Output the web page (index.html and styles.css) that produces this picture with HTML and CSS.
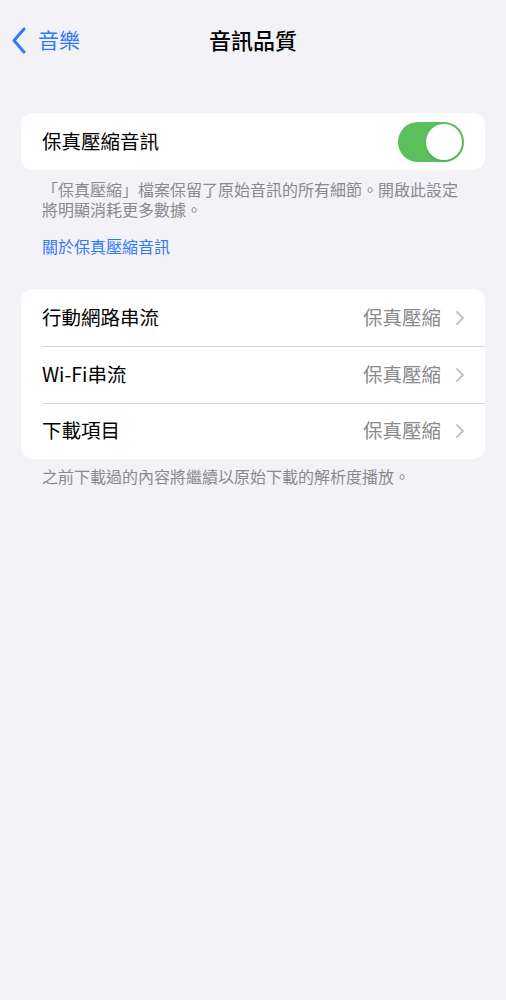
FILE: index.html
```html
<!DOCTYPE html>
<html>
	<head>
		<meta charset="UTF-8">
		<title>音訊品質</title>
		<link rel="stylesheet" href="styles.css">
	</head>
	<body>
		<div class="nav">
			<a class="back">
				<svg width="16" height="27" viewBox="0 0 16 27"><path d="M13 2 L3 13.5 L13 25" fill="none" stroke="#3478f6" stroke-width="3" stroke-linecap="round" stroke-linejoin="round"/></svg>
				<span>音樂</span>
			</a>
			<div class="title">音訊品質</div>
			<div></div>
		</div>

		<div class="card card-first">
			<div class="row">
				<span class="label">保真壓縮音訊</span>
				<div class="switch on"><div class="knob"></div></div>
			</div>
		</div>
		<p class="note">「保真壓縮」檔案保留了原始音訊的所有細節。開啟此設定將明顯消耗更多數據。</p>
		<a class="link">關於保真壓縮音訊</a>

		<div class="card card-second">
			<div class="row">
				<span class="label">行動網路串流</span>
				<span class="value">保真壓縮</span>
				<svg class="chev" width="10" height="16" viewBox="0 0 10 16"><path d="M2 2 L8 8 L2 14" fill="none" stroke="#c4c4c7" stroke-width="2" stroke-linecap="round" stroke-linejoin="round"/></svg>
			</div>
			<div class="row">
				<span class="label">Wi-Fi串流</span>
				<span class="value">保真壓縮</span>
				<svg class="chev" width="10" height="16" viewBox="0 0 10 16"><path d="M2 2 L8 8 L2 14" fill="none" stroke="#c4c4c7" stroke-width="2" stroke-linecap="round" stroke-linejoin="round"/></svg>
			</div>
			<div class="row">
				<span class="label">下載項目</span>
				<span class="value">保真壓縮</span>
				<svg class="chev" width="10" height="16" viewBox="0 0 10 16"><path d="M2 2 L8 8 L2 14" fill="none" stroke="#c4c4c7" stroke-width="2" stroke-linecap="round" stroke-linejoin="round"/></svg>
			</div>
		</div>
		<p class="note note-last">之前下載過的內容將繼續以原始下載的解析度播放。</p>
	</body>
</html>
```
FILE: styles.css
```css
html, body {
	margin: 0;
	padding: 0;
	background: #f2f2f7;
	font-family: "Noto Sans CJK TC", "Liberation Sans", sans-serif;
	color: #000;
}
.nav {
	height: 80px;
	box-sizing: border-box;
	padding-bottom: 3px;
	display: grid;
	grid-template-columns: 1fr auto 1fr;
	align-items: center;
}
.back {
	display: flex;
	align-items: center;
	padding-left: 11px;
	color: #3478f6;
	font-size: 21px;
	line-height: 26px;
}
.back svg {
	margin-right: 11px;
	margin-top: 3px;
}
.title {
	font-size: 22px;
	font-weight: 500;
	line-height: 26px;
}
.card {
	margin: 0 21px;
	background: #fff;
	border-radius: 12px;
	overflow: hidden;
}
.card-first {
	margin-top: 33px;
}
.card-second {
	margin-top: 33px;
}
.row {
	height: 57px;
	box-sizing: border-box;
	display: flex;
	align-items: center;
	padding: 0 21px 2px;
	position: relative;
}
.card-second .row + .row::before {
	content: "";
	position: absolute;
	top: 0;
	left: 21px;
	right: 0;
	border-top: 1px solid #d8d8dc;
}
.card-second .row:last-child {
	height: 56px;
}
.card-first .row {
	padding-bottom: 0;
}
.label {
	flex: 1;
	font-size: 19.5px;
	line-height: 24px;
}
.value {
	font-size: 19.5px;
	line-height: 24px;
	color: #8a8a8e;
	margin-right: 14px;
}
.chev {
	margin-right: -1px;
	margin-top: 2px;
}
.switch {
	width: 66px;
	height: 40px;
	border-radius: 20px;
	background: #5bbf5c;
	position: relative;
}
.knob {
	position: absolute;
	top: 2px;
	right: 2px;
	width: 36px;
	height: 36px;
	border-radius: 50%;
	background: #fff;
	box-shadow: 0 1px 3px rgba(0,0,0,.15);
}
.card-first .label {
	margin-top: -2px;
}
.note {
	margin: 9px 42px 0;
	font-size: 16px;
	line-height: 20px;
	color: #8a8a8e;
}
.note-last {
	margin-top: 7px;
}
.link {
	display: block;
	margin: 17px 42px 0;
	font-size: 16px;
	line-height: 20px;
	color: #3478f6;
}
```
